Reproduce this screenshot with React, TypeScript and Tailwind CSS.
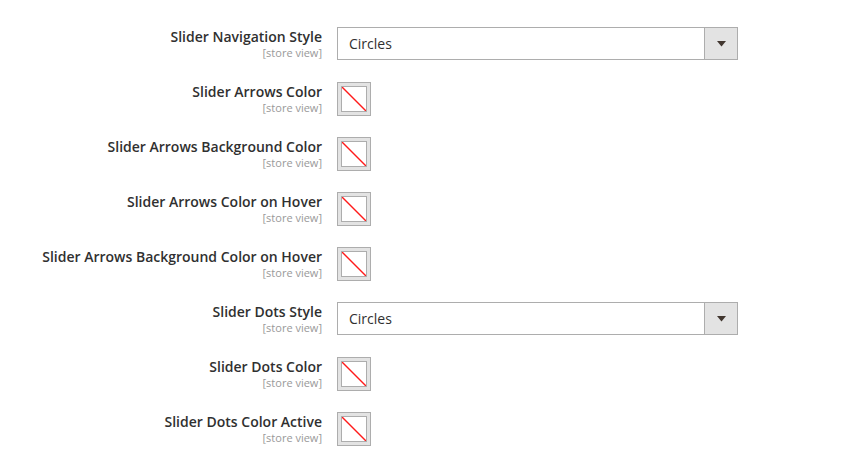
import React from 'react';

type Row = { label: string; kind: 'select' | 'color' };

const rows: Row[] = [
  { label: 'Slider Navigation Style', kind: 'select' },
  { label: 'Slider Arrows Color', kind: 'color' },
  { label: 'Slider Arrows Background Color', kind: 'color' },
  { label: 'Slider Arrows Color on Hover', kind: 'color' },
  { label: 'Slider Arrows Background Color on Hover', kind: 'color' },
  { label: 'Slider Dots Style', kind: 'select' },
  { label: 'Slider Dots Color', kind: 'color' },
  { label: 'Slider Dots Color Active', kind: 'color' },
];

const SelectBox = () => (
  <div className="flex h-[33px] w-[401px] border border-[#adadad] bg-white">
    <div className="flex flex-1 items-center pl-[11px] text-[14px] text-[#303030]">Circles</div>
    <div className="flex w-[33px] items-center justify-center border-l border-[#adadad] bg-[#e3e3e3]">
      <svg width="9" height="6" viewBox="0 0 9 6">
        <polygon points="0,0 9,0 4.5,5.5" fill="#41362f" />
      </svg>
    </div>
  </div>
);

const ColorSwatch = () => (
  <div className="flex h-[34px] w-[34px] items-center justify-center border border-[#adadad] bg-[#e3e3e3]">
    <div className="h-[26px] w-[26px] border border-[#adadad] bg-white">
      <svg width="24" height="24" viewBox="0 0 24 24" className="block">
        <polygon points="0,0 1,0 24,23 24,24 23,24 0,1" fill="#ff1a1a" />
      </svg>
    </div>
  </div>
);

export default function App() {
  return (
    <div className="min-h-[473px] w-[850px] bg-white pt-[27px]" style={{ fontFamily: '"Open Sans", sans-serif' }}>
      {rows.map((row, i) => (
        <div key={i} className="flex h-[55px]">
          <div className="w-[322px] pt-[1px] text-right">
            <div className="text-[14px] font-semibold leading-[18px] text-[#303030]">{row.label}</div>
            <div className="text-[11px] leading-[13px] text-[#999999]">[store view]</div>
          </div>
          <div className="ml-[15px]">{row.kind === 'select' ? <SelectBox /> : <ColorSwatch />}</div>
        </div>
      ))}
    </div>
  );
}
